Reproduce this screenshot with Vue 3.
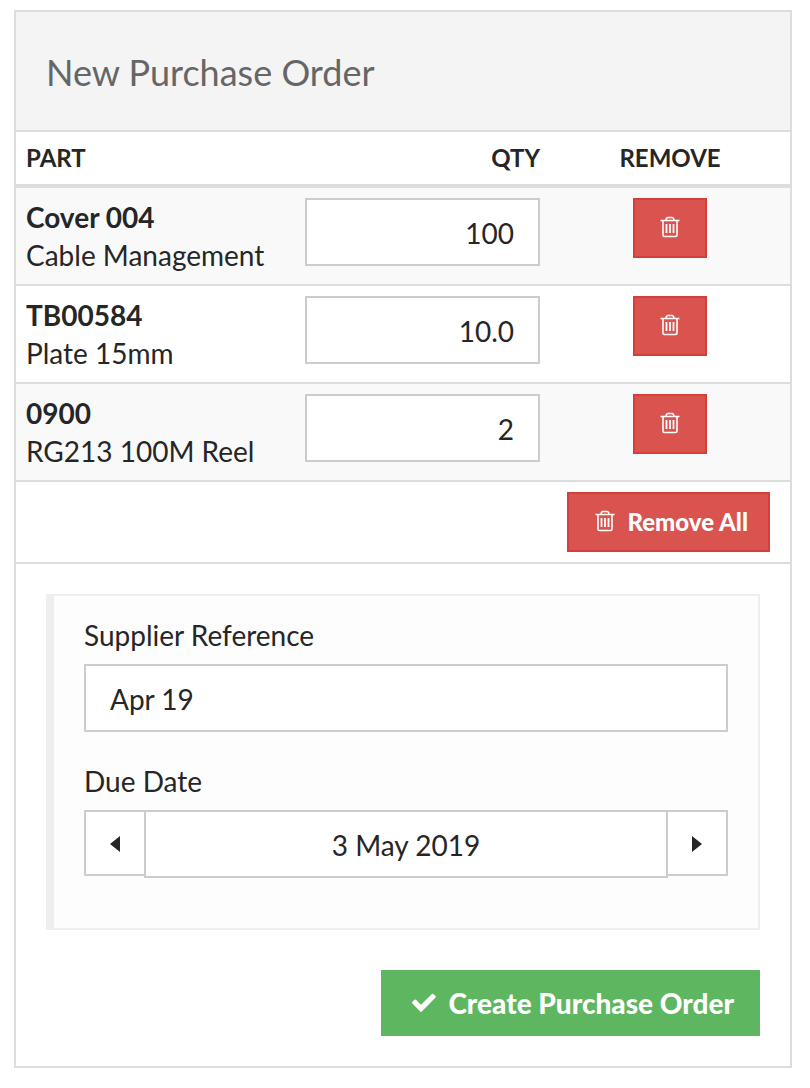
<script setup>
import { ref } from 'vue'

const parts = ref([
  { code: 'Cover 004', name: 'Cable Management', qty: '100' },
  { code: 'TB00584', name: 'Plate 15mm', qty: '10.0' },
  { code: '0900', name: 'RG213 100M Reel', qty: '2' },
])
const reference = ref('Apr 19')
const dueDate = ref(new Date(2019, 4, 3))
const months = ['Jan', 'Feb', 'Mar', 'Apr', 'May', 'Jun', 'Jul', 'Aug', 'Sep', 'Oct', 'Nov', 'Dec']

function format(d) {
  return `${d.getDate()} ${months[d.getMonth()]} ${d.getFullYear()}`
}
function shift(days) {
  const d = new Date(dueDate.value)
  d.setDate(d.getDate() + days)
  dueDate.value = d
}
</script>

<template>
  <form class="panel" @submit.prevent>
    <header class="panel-header">
      <h1>New Purchase Order</h1>
    </header>

    <table class="parts">
      <colgroup>
        <col class="col-part" />
        <col class="col-qty" />
        <col class="col-remove" />
      </colgroup>
      <thead>
        <tr>
          <th scope="col">PART</th>
          <th scope="col" class="right">QTY</th>
          <th scope="col" class="center">REMOVE</th>
        </tr>
      </thead>
      <tbody>
        <tr v-for="(part, i) in parts" :key="part.code">
          <td>
            <strong>{{ part.code }}</strong>
            <div>{{ part.name }}</div>
          </td>
          <td>
            <input v-model="part.qty" class="field right" type="text" :aria-label="`Quantity of ${part.code}`" />
          </td>
          <td class="center">
            <button type="button" class="btn danger" :aria-label="`Remove ${part.code}`" @click="parts.splice(i, 1)">
              <svg class="trash" viewBox="0 0 20 22" aria-hidden="true">
                <path d="M.5 4.5h19M6 4.5q.2-3 2-3h4q1.800 0 2 3M3 4.500v14.500q0 1.500 1.500 1.500h11q1.500 0 1.500-1.500V4.500" />
                <path class="bars" d="M6.500 8v9M10 8v9M13.500 8v9" />
              </svg>
            </button>
          </td>
        </tr>
      </tbody>
      <tfoot>
        <tr>
          <td colspan="3" class="remove-all">
            <button type="button" class="btn danger" @click="parts = []">
              <svg class="trash" viewBox="0 0 20 22" aria-hidden="true">
                <path d="M.5 4.5h19M6 4.5q.2-3 2-3h4q1.800 0 2 3M3 4.500v14.500q0 1.500 1.500 1.500h11q1.500 0 1.500-1.500V4.500" />
                <path class="bars" d="M6.500 8v9M10 8v9M13.500 8v9" />
              </svg>
              <span>Remove All</span>
            </button>
          </td>
        </tr>
      </tfoot>
    </table>

    <div class="panel-body">
      <section class="details">
        <div class="group">
          <label for="reference">Supplier Reference</label>
          <input id="reference" v-model="reference" class="field" type="text" />
        </div>
        <div class="group">
          <label for="due">Due Date</label>
          <div class="date">
            <button type="button" class="step prev" aria-label="Previous day" @click="shift(-1)">
              <svg viewBox="0 0 10 16" aria-hidden="true"><path d="M10 0v16L0 8z" /></svg>
            </button>
            <input id="due" class="field center" type="text" :value="format(dueDate)" readonly />
            <button type="button" class="step next" aria-label="Next day" @click="shift(1)">
              <svg viewBox="0 0 10 16" aria-hidden="true"><path d="M0 0v16l10-8z" /></svg>
            </button>
          </div>
        </div>
      </section>

      <button type="submit" class="btn success">
        <svg class="check" viewBox="0 0 24 20" aria-hidden="true">
          <path d="M.4 10.400q-.7-.8 0-1.600l2-2q.8-.7 1.600 0l5 5L19.900 1q.8-.7 1.600 0l2 2q.7.8 0 1.600L9.800 18.600q-.8.700-1.600 0z" />
        </svg>
        <span>Create Purchase Order</span>
      </button>
    </div>
  </form>
</template>

<style>
body {
  background: #fff;
}
</style>

<style scoped>
* {
  box-sizing: border-box;
}
.panel {
  margin: 10px 18px 20px 14px;
  border: 2px solid #ddd;
  background: #fff;
  color: #262626;
  font-family: Lato, "Open Sans", sans-serif;
  font-size: 28px;
  line-height: 38px;
}
.panel-header {
  padding: 37px 30px 35px;
  background: #f4f4f4;
  border-bottom: 2px solid #ddd;
}
h1 {
  margin: 0;
  font-size: 36px;
  line-height: 46px;
  font-weight: 400;
  color: #666;
}
.parts {
  width: 100%;
  table-layout: fixed;
  border-collapse: separate;
  border-spacing: 0;
}
.col-part {
  width: 36%;
}
.col-qty {
  width: 33%;
}
.col-remove {
  width: 31%;
}
th,
td {
  padding: 10px;
  text-align: left;
  vertical-align: top;
  border-bottom: 2px solid #ddd;
}
th {
  font-size: 24px;
  line-height: 32px;
  font-weight: 700;
  border-bottom-width: 4px;
}
tbody tr:nth-child(odd) {
  background: #f9f9f9;
}
strong {
  display: block;
  font-weight: 700;
}
.right {
  text-align: right;
}
.center {
  text-align: center;
}
.field {
  display: block;
  width: 100%;
  min-width: 0;
  height: 68px;
  margin: 0;
  padding: 2px 24px 0;
  border: 2px solid #ccc;
  border-radius: 0;
  background: #fff;
  color: inherit;
  font: inherit;
}
.btn {
  display: inline-flex;
  align-items: center;
  justify-content: center;
  border: 2px solid;
  border-radius: 0;
  color: #fff;
  font-family: inherit;
  font-weight: 900;
  cursor: pointer;
}
.danger {
  gap: 12px;
  height: 60px;
  padding: 0 20px 2px 26px;
  background: #d9534f;
  border-color: #d43f3a;
  font-size: 24px;
}
td.center {
  font-size: 0;
}
td.center .danger {
  padding: 0 25px 2px;
}
.parts .remove-all {
  padding: 10px 20px;
  text-align: right;
  font-size: 0;
}
.trash {
  width: 20px;
  height: 22px;
  fill: none;
  stroke: #fff;
  stroke-width: 1.6;
}
.bars {
  stroke-width: 1.8;
}
.panel-body {
  display: flex;
  flex-direction: column;
  padding: 30px;
}
.details {
  display: flex;
  flex-direction: column;
  gap: 30px;
  margin-bottom: 40px;
  padding: 20px 30px 50px;
  background: #fdfdfd;
  border: 2px solid #eee;
  border-left-width: 8px;
}
label {
  display: block;
  margin-bottom: 10px;
}
.date {
  display: flex;
  align-items: flex-start;
}
.step {
  display: flex;
  flex: none;
  align-items: center;
  justify-content: center;
  width: 60px;
  height: 66px;
  padding: 2px 0 0;
  border: 2px solid #ccc;
  border-radius: 0;
  background: #fff;
  cursor: pointer;
}
.prev {
  border-right: 0;
}
.next {
  border-left: 0;
}
.step svg {
  width: 10px;
  height: 16px;
  fill: #262626;
}
.success {
  align-self: flex-end;
  gap: 12px;
  height: 66px;
  padding: 0 24px 0 29px;
  background: #5eb660;
  border-color: #5eb660;
  font-size: 28px;
}
.check {
  width: 24px;
  height: 20px;
  fill: #fff;
}
</style>
